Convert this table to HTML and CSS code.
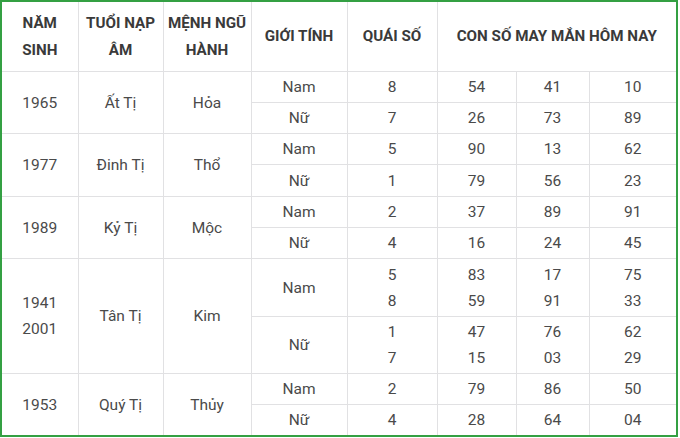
FILE: index.html
```html
<!DOCTYPE html>
<html lang="vi">
<head>
<meta charset="utf-8">
<link rel="stylesheet" href="styles.css">
</head>
<body>
<div class="frame">
<table class="lucky">
<colgroup>
<col class="c1"><col class="c2"><col class="c3"><col class="c4"><col class="c5"><col class="c6"><col class="c7"><col class="c8">
</colgroup>
<thead>
<tr class="head">
<th>NĂM<br>SINH</th>
<th>TUỔI NẠP<br>ÂM</th>
<th>MỆNH NGŨ<br>HÀNH</th>
<th>GIỚI TÍNH</th>
<th>QUÁI SỐ</th>
<th colspan="3">CON SỐ MAY MẮN HÔM NAY</th>
</tr>
</thead>
<tbody>
<tr class="r31"><td rowspan="2">1965</td><td rowspan="2">Ất Tị</td><td rowspan="2">Hỏa</td><td>Nam</td><td>8</td><td>54</td><td>41</td><td>10</td></tr>
<tr class="r31"><td>Nữ</td><td>7</td><td>26</td><td>73</td><td>89</td></tr>
<tr class="r31"><td rowspan="2">1977</td><td rowspan="2">Đinh Tị</td><td rowspan="2">Thổ</td><td>Nam</td><td>5</td><td>90</td><td>13</td><td>62</td></tr>
<tr class="r32"><td>Nữ</td><td>1</td><td>79</td><td>56</td><td>23</td></tr>
<tr class="r31"><td rowspan="2">1989</td><td rowspan="2">Kỷ Tị</td><td rowspan="2">Mộc</td><td>Nam</td><td>2</td><td>37</td><td>89</td><td>91</td></tr>
<tr class="r31"><td>Nữ</td><td>4</td><td>16</td><td>24</td><td>45</td></tr>
<tr class="r58"><td rowspan="2">1941<br>2001</td><td rowspan="2">Tân Tị</td><td rowspan="2">Kim</td><td>Nam</td><td>5<br>8</td><td>83<br>59</td><td>17<br>91</td><td>75<br>33</td></tr>
<tr class="r57"><td>Nữ</td><td>1<br>7</td><td>47<br>15</td><td>76<br>03</td><td>62<br>29</td></tr>
<tr class="r31"><td rowspan="2">1953</td><td rowspan="2">Quý Tị</td><td rowspan="2">Thủy</td><td>Nam</td><td>2</td><td>79</td><td>86</td><td>50</td></tr>
<tr class="r31"><td>Nữ</td><td>4</td><td>28</td><td>64</td><td>04</td></tr>
</tbody>
</table>
</div>
</body>
</html>
```
FILE: styles.css
```css
html, body {
  margin: 0;
  padding: 0;
  background: #ffffff;
}
.frame {
  width: 674px;
  height: 433px;
  border: 2px solid #34a043;
  overflow: hidden;
}
.lucky {
  width: 674px;
  border-collapse: collapse;
  border-style: hidden;
  table-layout: fixed;
  font-family: Roboto, "Liberation Sans", sans-serif;
  font-size: 15.5px;
  color: #4a4a4a;
}
.c1 { width: 76px; }
.c2 { width: 85px; }
.c3 { width: 88px; }
.c4 { width: 96px; }
.c5 { width: 90px; }
.c6 { width: 79px; }
.c7 { width: 73px; }
.c8 { width: 87px; }
.lucky th, .lucky td {
  border: 1px solid #e1e1e3;
  text-align: center;
  vertical-align: middle;
  padding: 0;
}
.lucky th {
  font-weight: 700;
  color: #3a3a3a;
  font-size: 15.2px;
  line-height: 27px;
  height: 69px;
}
.lucky td {
  line-height: 26px;
}
.r31 td { height: 30px; }
.r32 td { height: 31px; }
.r58 td { height: 57px; }
.r57 td { height: 56px; }
```
